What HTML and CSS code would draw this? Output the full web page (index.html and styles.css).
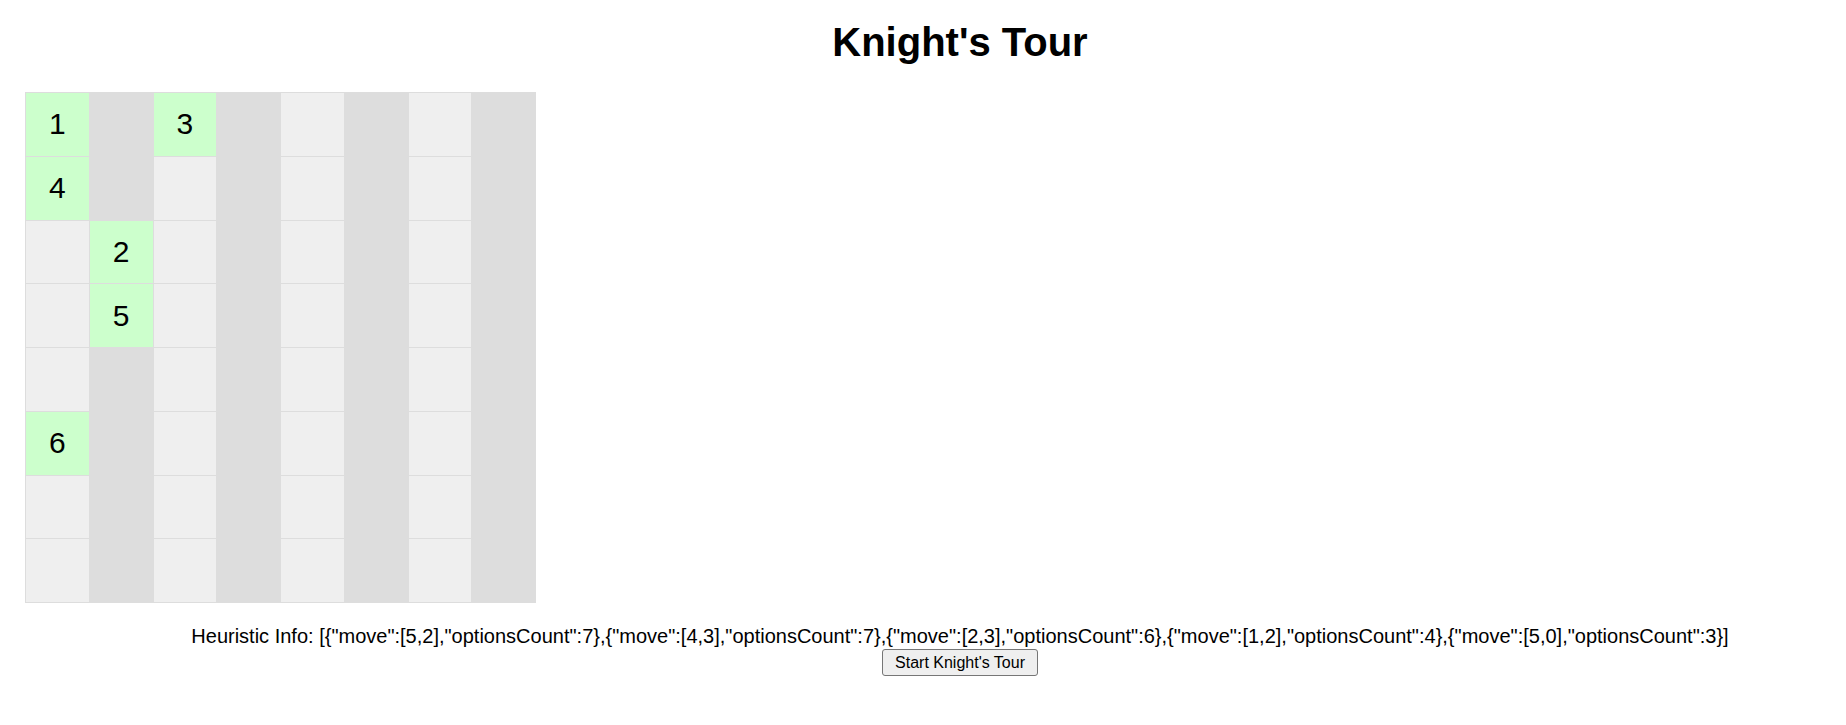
FILE: index.html
```html
<!DOCTYPE html>
<html>
<head>
<meta charset="utf-8">
<title>Knight's Tour</title>
<link rel="stylesheet" href="styles.css">
</head>
<body>
<div class="page">
  <h1 class="title">Knight's Tour</h1>
  <div class="board">
    <div class="cell visited">1</div><div class="cell dark"></div><div class="cell visited">3</div><div class="cell dark"></div><div class="cell light"></div><div class="cell dark"></div><div class="cell light"></div><div class="cell dark"></div>
    <div class="cell visited">4</div><div class="cell dark"></div><div class="cell light"></div><div class="cell dark"></div><div class="cell light"></div><div class="cell dark"></div><div class="cell light"></div><div class="cell dark"></div>
    <div class="cell light"></div><div class="cell visited">2</div><div class="cell light"></div><div class="cell dark"></div><div class="cell light"></div><div class="cell dark"></div><div class="cell light"></div><div class="cell dark"></div>
    <div class="cell light"></div><div class="cell visited">5</div><div class="cell light"></div><div class="cell dark"></div><div class="cell light"></div><div class="cell dark"></div><div class="cell light"></div><div class="cell dark"></div>
    <div class="cell light"></div><div class="cell dark"></div><div class="cell light"></div><div class="cell dark"></div><div class="cell light"></div><div class="cell dark"></div><div class="cell light"></div><div class="cell dark"></div>
    <div class="cell visited">6</div><div class="cell dark"></div><div class="cell light"></div><div class="cell dark"></div><div class="cell light"></div><div class="cell dark"></div><div class="cell light"></div><div class="cell dark"></div>
    <div class="cell light"></div><div class="cell dark"></div><div class="cell light"></div><div class="cell dark"></div><div class="cell light"></div><div class="cell dark"></div><div class="cell light"></div><div class="cell dark"></div>
    <div class="cell light"></div><div class="cell dark"></div><div class="cell light"></div><div class="cell dark"></div><div class="cell light"></div><div class="cell dark"></div><div class="cell light"></div><div class="cell dark"></div>
  </div>
  <div class="info">Heuristic Info: [{"move":[5,2],"optionsCount":7},{"move":[4,3],"optionsCount":7},{"move":[2,3],"optionsCount":6},{"move":[1,2],"optionsCount":4},{"move":[5,0],"optionsCount":3}]</div>
  <div class="actions"><button class="start-btn">Start Knight's Tour</button></div>
</div>
</body>
</html>
```
FILE: styles.css
```css
html, body {
  margin: 0;
  padding: 0;
  background: #ffffff;
}

body {
  font-family: "Liberation Sans", Arial, sans-serif;
  font-size: 20px;
  color: #000;
}

.page {
  padding: 19px 8px 0 8px;
}

.title {
  margin: 0 0 27px 0;
  padding-left: 74px;
  font-size: 40px;
  font-weight: bold;
  line-height: 46px;
  text-align: center;
}

.board {
  display: grid;
  grid-template-columns: repeat(8, 63.75px);
  grid-auto-rows: 63.75px;
  width: max-content;
  margin-left: 17px;
  border-left: 1px solid #dddddd;
  border-top: 1px solid #dddddd;
}

.cell {
  display: flex;
  align-items: center;
  justify-content: center;
  border-right: 1px solid #dddddd;
  border-bottom: 1px solid #dddddd;
  font-size: 30px;
}

.light {
  background: #efefef;
}

.dark {
  background: #dddddd;
}

.visited {
  background: #ccffcc;
}

.info {
  margin-top: 22px;
  padding-left: 74px;
  text-align: center;
  line-height: 23px;
}

.actions {
  padding-left: 74px;
  text-align: center;
  line-height: 0;
  padding-top: 1px;
}

.start-btn {
  box-sizing: border-box;
  height: 27px;
  padding: 0 12px;
  font-family: "Liberation Sans", Arial, sans-serif;
  font-size: 16px;
  line-height: 18px;
  color: #000;
  background: #efefef;
  border: 1px solid #767676;
  border-radius: 3px;
}
```
